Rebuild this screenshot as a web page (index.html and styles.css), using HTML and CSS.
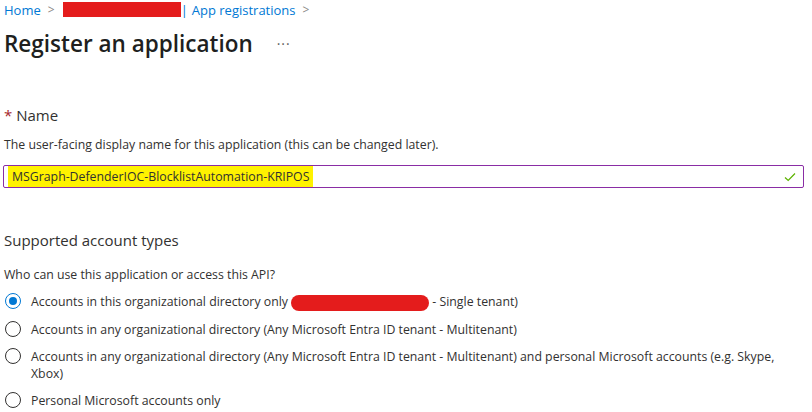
FILE: index.html
```html
<!DOCTYPE html>
<html lang="en">
<head>
    <meta charset="UTF-8">
    <title>Register an application</title>
    <link rel="stylesheet" href="styles.css">
</head>
<body>
    <nav class="crumbs">
        <a href="#">Home</a>
        <span class="chev">&gt;</span>
        <span class="redact redact-crumb"></span><span class="bar">|</span>
        <a href="#">App registrations</a>
        <span class="chev">&gt;</span>
    </nav>

    <div class="title-row">
        <h1>Register an application</h1>
        <span class="more">&middot;&middot;&middot;</span>
    </div>

    <section class="field">
        <h2><span class="req">*</span> Name</h2>
        <p class="hint">The user-facing display name for this application (this can be changed later).</p>
        <div class="input">
            <span class="value">MSGraph-DefenderIOC-BlocklistAutomation-KRIPOS</span>
            <svg class="ok" width="12" height="10" viewBox="0 0 12 10">
                <path d="M1 5.5 L4.2 8.5 L11 1.5" fill="none" stroke="#5db300" stroke-width="1.2"/>
            </svg>
        </div>
    </section>

    <section class="field accounts">
        <h2>Supported account types</h2>
        <p class="hint">Who can use this application or access this API?</p>
        <ul class="radios">
            <li><span class="radio checked"></span><span>Accounts in this organizational directory only <span class="redact redact-tenant"></span> - Single tenant)</span></li>
            <li><span class="radio"></span><span>Accounts in any organizational directory (Any Microsoft Entra ID tenant - Multitenant)</span></li>
            <li><span class="radio"></span><span>Accounts in any organizational directory (Any Microsoft Entra ID tenant - Multitenant) and personal Microsoft accounts (e.g. Skype, Xbox)</span></li>
            <li><span class="radio"></span><span>Personal Microsoft accounts only</span></li>
        </ul>
    </section>
</body>
</html>
```

FILE: styles.css
```css
body {
    margin: 0;
    padding: 0 4px;
    font-family: 'Open Sans', 'Noto Sans', sans-serif;
    color: #323130;
    background: #fff;
}
.crumbs {
    display: flex;
    align-items: center;
    height: 19px;
    font-size: 13px;
}
.crumbs a {
    color: #0078d4;
    text-decoration: none;
}
.chev {
    color: #8a8886;
    margin: 0 8px 0 7px;
    font-size: 12px;
}
.redact {
    display: inline-block;
    background: #e41c1c;
}
.redact-crumb {
    width: 118px;
    height: 15px;
}
.bar {
    color: #0078d4;
    margin-right: 4px;
}
.title-row {
    display: flex;
    align-items: center;
    height: 48px;
}
h1 {
    margin: 0;
    font-size: 22.5px;
    font-weight: 600;
    color: #201f1e;
}
.more {
    margin-left: 24px;
    color: #605e5c;
    font-size: 14px;
    letter-spacing: 1px;
}
.field h2 {
    margin: 38px 0 0;
    font-size: 15px;
    font-weight: 400;
}
.req {
    color: #a4262c;
}
.hint {
    margin: 11px 0 0;
    font-size: 12.3px;
}
.input {
    margin: 12px 0 0 -1px;
    width: 788px;
    height: 21px;
    border: 1px solid #8a2da5;
    border-radius: 2px;
    display: flex;
    align-items: center;
    justify-content: space-between;
    padding: 0 7px 0 4px;
}
.value {
    background: #fff200;
    font-size: 12.3px;
    padding: 2px 4px;
    line-height: 17px;
}
.accounts h2 {
    margin-top: 42px;
}
.accounts .hint {
    margin-top: 16px;
}
.radios {
    list-style: none;
    padding: 0;
    margin: 10px 0 0;
    font-size: 12.3px;
}
.radios li {
    display: flex;
    align-items: flex-start;
    line-height: 17px;
    margin-bottom: 10px;
}
.radio {
    flex: none;
    width: 16px;
    height: 16px;
    border: 1px solid #323130;
    border-radius: 50%;
    box-sizing: border-box;
    margin: 0 10px 0 1px;
    position: relative;
}
.radio.checked {
    border-color: #0078d4;
}
.radio.checked::after {
    content: "";
    position: absolute;
    left: 3px;
    top: 3px;
    width: 8px;
    height: 8px;
    border-radius: 50%;
    background: #0078d4;
}
.redact-tenant {
    width: 138px;
    height: 16px;
    border-radius: 8px;
    vertical-align: middle;
}
```
